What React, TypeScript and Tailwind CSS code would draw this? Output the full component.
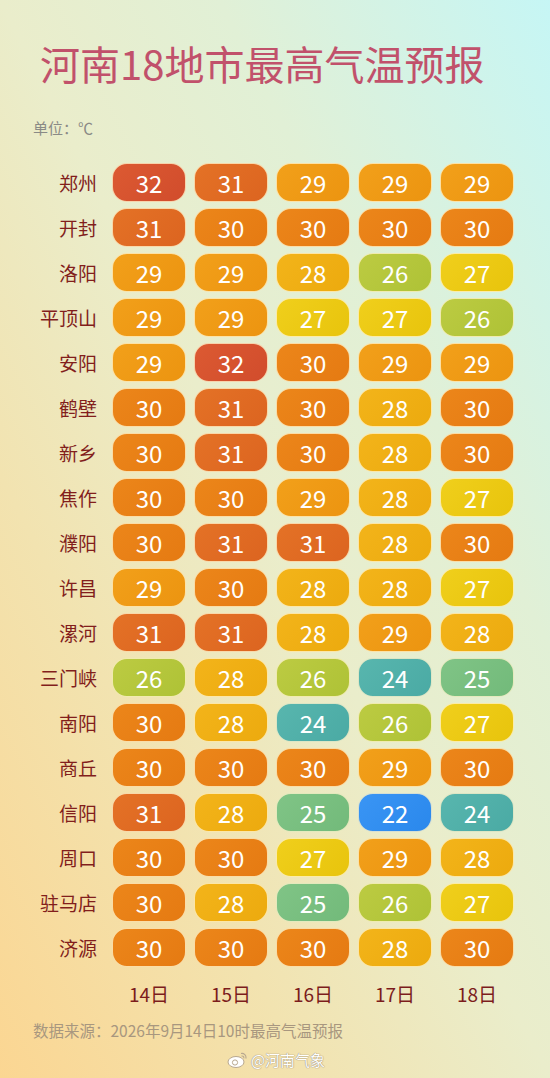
const FONT = '"Noto Sans CJK SC", "Noto Sans", sans-serif'

const rows: [string, number[]][] = [
  ['郑州', [32, 31, 29, 29, 29]],
  ['开封', [31, 30, 30, 30, 30]],
  ['洛阳', [29, 29, 28, 26, 27]],
  ['平顶山', [29, 29, 27, 27, 26]],
  ['安阳', [29, 32, 30, 29, 29]],
  ['鹤壁', [30, 31, 30, 28, 30]],
  ['新乡', [30, 31, 30, 28, 30]],
  ['焦作', [30, 30, 29, 28, 27]],
  ['濮阳', [30, 31, 31, 28, 30]],
  ['许昌', [29, 30, 28, 28, 27]],
  ['漯河', [31, 31, 28, 29, 28]],
  ['三门峡', [26, 28, 26, 24, 25]],
  ['南阳', [30, 28, 24, 26, 27]],
  ['商丘', [30, 30, 30, 29, 30]],
  ['信阳', [31, 28, 25, 22, 24]],
  ['周口', [30, 30, 27, 29, 28]],
  ['驻马店', [30, 28, 25, 26, 27]],
  ['济源', [30, 30, 30, 28, 30]],
]

const days = ['14日', '15日', '16日', '17日', '18日']

const tempColor = (t: number) => {
  switch (t) {
    case 32:
      return 'bg-[linear-gradient(135deg,#dc5a32,#d14c2c)]'
    case 31:
      return 'bg-[linear-gradient(135deg,#e47226,#dc6420)]'
    case 30:
      return 'bg-[linear-gradient(135deg,#ec861a,#e57a12)]'
    case 29:
      return 'bg-[linear-gradient(135deg,#f2a01a,#ec9410)]'
    case 28:
      return 'bg-[linear-gradient(135deg,#f3b41a,#ecaa0e)]'
    case 27:
      return 'bg-[linear-gradient(135deg,#f0cf1c,#e8c40c)]'
    case 26:
      return 'bg-[linear-gradient(135deg,#bccb42,#aec236)]'
    case 25:
      return 'bg-[linear-gradient(135deg,#80c486,#72ba7a)]'
    case 24:
      return 'bg-[linear-gradient(135deg,#58b6ae,#4aaaa4)]'
    case 22:
      return 'bg-[linear-gradient(135deg,#3a95f4,#2a88ec)]'
    default:
      return 'bg-[#e57a12]'
  }
}

function WeiboIcon() {
  return (
    <svg width="22" height="18" viewBox="0 0 22 18">
      <ellipse cx="9" cy="11" rx="8" ry="5.5" fill="#fff" stroke="#b8a890" strokeWidth="1" />
      <circle cx="8" cy="11.5" r="2.6" fill="none" stroke="#b8a890" strokeWidth="1" />
      <path d="M14 2.5c3 -0.6 5.6 1.8 5 5" fill="none" stroke="#b8a890" strokeWidth="1.2" />
      <path d="M14.5 5c1.4 -0.3 2.6 0.8 2.3 2.3" fill="none" stroke="#b8a890" strokeWidth="1.1" />
    </svg>
  )
}

export default function App() {
  return (
    <div
      className="relative h-[1078px] w-[550px] overflow-hidden bg-[linear-gradient(to_bottom_left,#c6f6f5_0%,#e1f0d6_30%,#eaedcb_50%,#f2e3b0_72%,#fbd692_100%)]"
      style={{ fontFamily: FONT }}
    >
      <h1 className="pl-[40px] pt-[43px] text-[40px] font-normal leading-[40px] text-[#c1516b]">
        河南18地市最高气温预报
      </h1>

      <div className="mt-[35px] pl-[33px] text-[15px] leading-[20px] text-[#8a8a86]">
        单位：℃
      </div>

      <div className="mt-[25px] flex flex-col gap-[6px]">
        {rows.map(([city, temps]) => (
          <div key={city} className="flex items-center">
            <div className="w-[97px] text-right text-[19px] font-normal leading-[39px] text-[#821e1c]">
              {city}
            </div>
            <div className="ml-[15px] flex gap-[8px]">
              {temps.map((t, i) => (
                <div
                  key={i}
                  className={`flex h-[39px] w-[74px] items-center justify-center rounded-[15px] border-[1.5px] border-[#fff4cc]/80 text-[24px] font-normal text-white ${tempColor(t)}`}
                >
                  {t}
                </div>
              ))}
            </div>
          </div>
        ))}
      </div>

      <div className="ml-[112px] mt-[15px] flex gap-[8px]">
        {days.map((d) => (
          <div
            key={d}
            className="w-[74px] text-center text-[19px] font-normal leading-[24px] text-[#7c1c1c]"
          >
            {d}
          </div>
        ))}
      </div>

      <div className="mt-[13px] pl-[33px] text-[15.5px] leading-[22px] text-[#a8977f]">
        数据来源：2026年9月14日10时最高气温预报
      </div>

      <div className="mt-[9px] flex items-center justify-center gap-[2px] pl-[2px] text-[15px] leading-[20px] text-white [text-shadow:0_0_1px_#9a8a74,0_0_1px_#9a8a74]">
        <WeiboIcon />
        <span>@河南气象</span>
      </div>
    </div>
  )
}
